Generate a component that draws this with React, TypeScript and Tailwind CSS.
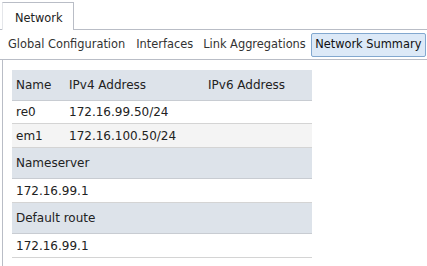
export default function App() {
  return (
    <div className="w-[427px] h-[266px] bg-white overflow-hidden text-[12px] text-[#222]" style={{ fontFamily: '"DejaVu Sans", Verdana, sans-serif' }}>
      {/* top tab strip */}
      <div className="h-[30px] pt-[2px] pl-[2px] flex border-b border-[#b9bdc6] text-[11.4px]">
        <div className="h-[28px] w-[72px] pl-[12px] pt-[4px] flex items-center bg-white border border-b-0 border-[#b9bdc6] border-l-[#e4e6ea] mb-[-1px] relative">
          Network
        </div>
      </div>

      {/* sub navigation */}
      <div className="h-[30px] flex items-center border-b border-[#b9bdc6] pl-[8px] text-[#333] text-[11.4px] whitespace-nowrap">
        <span className="shrink-0">Global Configuration</span>
        <span className="shrink-0 ml-[11px]">Interfaces</span>
        <span className="shrink-0 ml-[10px]">Link Aggregations</span>
        <span className="shrink-0 ml-[5px] h-[24px] w-[115px] justify-center flex items-center bg-[#dce9f7] border border-[#82a8cf] rounded-[2px] text-[#111]">
          Network Summary
        </span>
      </div>

      {/* content */}
      <div className="ml-[2px] border-l border-[#b9bdc6] h-[220px] pt-[10px] pl-[9px]">
        <div className="w-[300px]">
          <div className="h-[31px] flex items-center bg-[#dde3ea] border-b border-[#c8ccd2] px-[4px]">
            <span className="w-[53px]">Name</span>
            <span className="w-[139px]">IPv4 Address</span>
            <span>IPv6 Address</span>
          </div>
          <div className="h-[23px] flex items-center border-b border-[#d4d4d4] px-[4px]">
            <span className="w-[53px]">re0</span>
            <span>172.16.99.50/24</span>
          </div>
          <div className="h-[24px] flex items-center bg-[#f4f4f4] border-b border-[#d4d4d4] px-[4px]">
            <span className="w-[53px]">em1</span>
            <span>172.16.100.50/24</span>
          </div>
          <div className="h-[31px] flex items-center bg-[#dde3ea] border-b border-[#c8ccd2] px-[4px]">
            Nameserver
          </div>
          <div className="h-[24px] flex items-center border-b border-[#d4d4d4] px-[4px]">
            172.16.99.1
          </div>
          <div className="h-[31px] flex items-center bg-[#dde3ea] border-b border-[#c8ccd2] px-[4px]">
            Default route
          </div>
          <div className="h-[24px] flex items-center border-b border-[#d4d4d4] px-[4px]">
            172.16.99.1
          </div>
        </div>
      </div>
    </div>
  );
}
